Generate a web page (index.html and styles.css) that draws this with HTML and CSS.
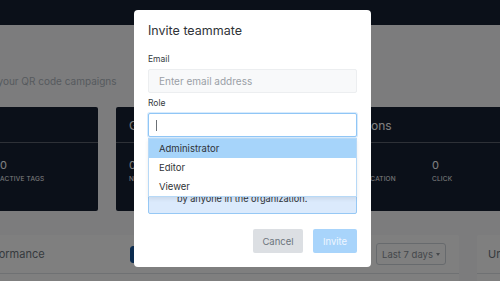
FILE: index.html
```html
<!DOCTYPE html>
<html lang="en">
  <head>
    <meta charset="UTF-8" />
    <meta name="viewport" content="width=device-width, initial-scale=1.0" />
    <title>Dashboard — Invite teammate</title>
    <link rel="stylesheet" href="styles.css">
  </head>
  <body>
    <!-- Top navigation -->
    <header class="topbar"></header>

    <!-- Dashboard (behind the modal) -->
    <main class="dashboard">
      <div class="intro">
        <h1>Dashboard</h1>
        <p>Track the performance of your QR code campaigns</p>
      </div>

      <div class="stats">
        <section class="stat-card">
          <h2>Tags</h2>
          <div class="stat-list">
            <div class="stat"><div class="stat-value">0</div><div class="stat-label">Total tags</div></div>
            <div class="stat"><div class="stat-value">0</div><div class="stat-label">Active tags</div></div>
          </div>
        </section>
        <section class="stat-card">
          <h2>Global scans</h2>
          <div class="stat-list">
            <div class="stat"><div class="stat-value">0</div><div class="stat-label">New scans</div></div>
          </div>
        </section>
        <section class="stat-card">
          <h2>Interactions</h2>
          <div class="stat-list wide">
            <div class="stat"><div class="stat-value">0</div><div class="stat-label">Scans by location</div></div>
            <div class="stat"><div class="stat-value">0</div><div class="stat-label">Click</div></div>
          </div>
        </section>
      </div>

      <div class="panels">
        <section class="panel">
          <div class="panel-head">
            <h2>Global campaign performance</h2>
            <div class="segmented">
              <button class="active">Scans</button>
              <button>Clicks</button>
              <button>Conversions</button>
            </div>
            <button class="range-btn">Last 7 days<span class="caret"></span></button>
          </div>
          <div class="panel-body"></div>
        </section>
        <section class="panel panel-side">
          <div class="panel-head">
            <h2>Unique scans</h2>
          </div>
          <div class="panel-body"></div>
        </section>
      </div>
    </main>

    <!-- Invite modal -->
    <div class="backdrop">
      <div class="modal">
        <h3>Invite teammate</h3>

        <div class="field">
          <label class="field-label" for="email">Email</label>
          <input class="input" id="email" type="text" placeholder="Enter email address" />
        </div>

        <div class="field">
          <label class="field-label">Role</label>
          <div class="select-wrap">
            <div class="input input-focused"><span class="text-caret"></span></div>
            <ul class="dropdown">
              <li class="highlighted">Administrator</li>
              <li>Editor</li>
              <li>Viewer</li>
            </ul>
          </div>
        </div>

        <div class="role-info">
          Administrators can manage tags, billing<br>
          and teammates, and they can be invited<br>
          by anyone in the organization.
        </div>

        <div class="actions">
          <button class="btn btn-cancel">Cancel</button>
          <button class="btn btn-invite" disabled>Invite</button>
        </div>
      </div>
    </div>
  </body>
</html>
```

FILE: styles.css
```css
/* ============ Variables ============ */
:root {
  --navy: #162032;
  --page-bg: #f9f9fa;
  --panel-bg: #ffffff;
  --muted: #6c757d;
  --line: #dee2e6;
  --focus: #90c6f6;
  --sky: #a8d4fb;
  --ink: #2f3337;
}

/* ============ Base ============ */
html,
body {
  height: 100%;
  margin: 0;
  overflow: hidden;
  font-family: Inter, "Noto Sans", sans-serif;
  background: var(--page-bg);
  -webkit-font-smoothing: antialiased;
}

button {
  font-family: inherit;
}

.topbar {
  height: 25px;
  background: var(--navy);
}

/* ============ Dashboard ============ */
.dashboard {
  width: 760px;
  margin-left: -126px; /* page is scrolled sideways */
  padding-top: 22px;
}

.intro h1 {
  margin: 0;
  font-size: 16px;
  line-height: 20px;
  font-weight: 600;
  color: #343a40;
  white-space: nowrap;
}
.intro p {
  margin: 7px 0 0;
  font-size: 10px;
  line-height: 14px;
  color: #adb5bd;
  white-space: nowrap;
}

.stats {
  display: grid;
  grid-template-columns: 224px 178px 1fr;
  gap: 18px;
  margin-top: 19px;
}

.stat-card {
  background: var(--navy);
  color: #fff;
  border-radius: 2px;
}
.stat-card h2 {
  margin: 0;
  height: 36px;
  padding: 1px 13px 0;
  box-sizing: border-box;
  display: flex;
  align-items: center;
  font-size: 12px;
  font-weight: 400;
  white-space: nowrap;
  border-bottom: 1px solid rgba(255, 255, 255, 0.3);
}

.stat-list {
  display: grid;
  grid-template-columns: repeat(2, 113px);
  padding: 16px 13px 27px;
}
.stat-list.wide {
  grid-template-columns: repeat(2, 107px);
}
.stat-value {
  font-size: 11px;
  line-height: 13px;
}
.stat-label {
  margin-top: 3px;
  font-size: 6.5px;
  line-height: 9px;
  letter-spacing: 0.2px;
  text-transform: uppercase;
  white-space: nowrap;
}

.panels {
  display: grid;
  grid-template-columns: 585px 1fr;
  gap: 18px;
  margin-top: 24px;
}
.panel {
  background: var(--panel-bg);
  border-radius: 2px;
}
.panel-head {
  height: 38px;
  padding: 0 13px;
  display: flex;
  align-items: center;
  border-bottom: 1px solid var(--line);
}
.panel-side .panel-head {
  padding: 0 11px;
}
.panel-head h2 {
  margin: 0;
  font-size: 11px;
  font-weight: 400;
  color: var(--muted);
  white-space: nowrap;
}
.panel-body {
  height: 160px;
}

.segmented {
  display: flex;
  width: 236px;
  height: 17px;
  margin-left: auto;
}
.segmented button {
  flex: 1;
  border: 1px solid #16569e;
  background: #fff;
  color: #16569e;
  font-size: 8px;
  padding: 0;
}
.segmented button.active {
  background: #16569e;
  color: #fff;
  border-radius: 3px 0 0 3px;
}

.range-btn {
  display: flex;
  align-items: center;
  justify-content: center;
  width: 70px;
  height: 22px;
  margin-left: 10px;
  padding: 0;
  border: 1px solid #ced4da;
  border-radius: 3px;
  background: #fff;
  color: #8a9097;
  font-size: 9.5px;
  white-space: nowrap;
}
.caret {
  width: 0;
  height: 0;
  margin-left: 3px;
  border-left: 2.5px solid transparent;
  border-right: 2.5px solid transparent;
  border-top: 3px solid currentColor;
}

/* ============ Modal ============ */
.backdrop {
  position: fixed;
  inset: 0;
  background: rgba(0, 0, 0, 0.5);
  display: flex;
  justify-content: center;
  align-items: flex-start;
  padding: 10px 0 0 5px;
}

.modal {
  width: 237px;
  box-sizing: border-box;
  padding: 14px;
  background: #fff;
  border-radius: 4px;
  color: var(--ink);
}
.modal h3 {
  margin: 0;
  font-size: 12.5px;
  line-height: 14px;
  font-weight: 400;
}

.field {
  margin-top: 5px;
}
.modal h3 + .field {
  margin-top: 16px;
}
.field-label {
  display: block;
  margin-bottom: 4px;
  font-size: 8.5px;
  line-height: 11px;
  color: #343a40;
}

.input {
  display: block;
  width: 100%;
  height: 24px;
  box-sizing: border-box;
  padding: 0 10px;
  border: 1px solid #eceef0;
  border-radius: 2px;
  background: #f8f9fa;
  font-family: inherit;
  font-size: 10px;
  color: var(--ink);
  outline: none;
}
.input::placeholder {
  color: #9aa0a6;
}
.input-focused {
  display: flex;
  align-items: center;
  padding: 0 7px;
  background: #fff;
  border-color: var(--focus);
  box-shadow: 0 0 0 1px rgba(144, 198, 246, 0.35);
}
.text-caret {
  width: 1px;
  height: 11px;
  background: #6b7075;
}

.select-wrap {
  position: relative;
}
.dropdown {
  position: absolute;
  top: calc(100% + 1px);
  left: 0;
  right: 0;
  z-index: 2;
  margin: 0;
  padding: 0;
  list-style: none;
  background: #fff;
  border: 1px solid #b7d9f7;
  box-shadow: 0 2px 4px rgba(0, 0, 0, 0.08);
}
.dropdown li {
  height: 19px;
  line-height: 19px;
  padding-left: 10px;
  font-size: 9.5px;
}
.dropdown li.highlighted {
  background: #a6d4fa;
}

.role-info {
  margin-top: 19px;
  padding: 9px 28px 8px;
  border: 1px solid #96c8f5;
  border-radius: 2px;
  background: #dbeafc;
  font-size: 9.2px;
  line-height: 13px;
  white-space: nowrap;
}

.actions {
  display: flex;
  justify-content: flex-end;
  gap: 10px;
  margin-top: 15px;
}
.btn {
  height: 24px;
  padding: 0;
  border: none;
  border-radius: 2px;
  font-size: 9.5px;
}
.btn-cancel {
  width: 50px;
  background: #dcdfe3;
  color: var(--muted);
}
.btn-invite {
  width: 44px;
  background: var(--sky);
  color: #eef6ff;
}
```
